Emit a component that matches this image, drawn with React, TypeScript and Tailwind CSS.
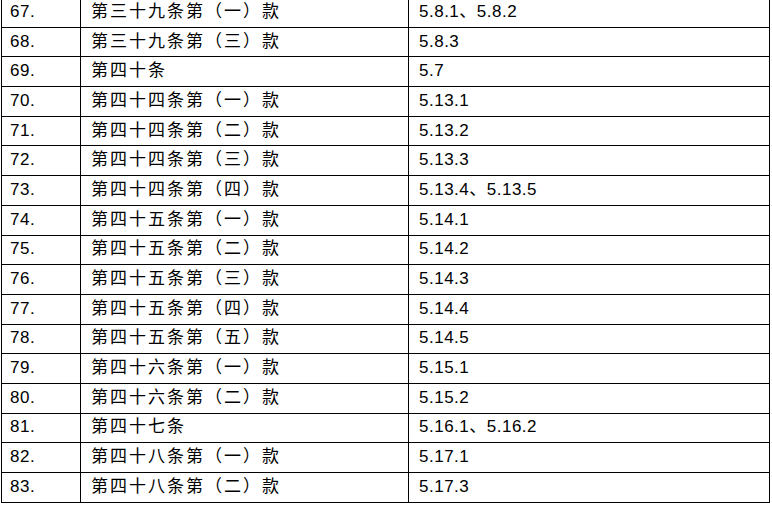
const rows: [string, string, string][] = [
  ["67.", "第三十九条第（一）款", "5.8.1、5.8.2"],
  ["68.", "第三十九条第（三）款", "5.8.3"],
  ["69.", "第四十条", "5.7"],
  ["70.", "第四十四条第（一）款", "5.13.1"],
  ["71.", "第四十四条第（二）款", "5.13.2"],
  ["72.", "第四十四条第（三）款", "5.13.3"],
  ["73.", "第四十四条第（四）款", "5.13.4、5.13.5"],
  ["74.", "第四十五条第（一）款", "5.14.1"],
  ["75.", "第四十五条第（二）款", "5.14.2"],
  ["76.", "第四十五条第（三）款", "5.14.3"],
  ["77.", "第四十五条第（四）款", "5.14.4"],
  ["78.", "第四十五条第（五）款", "5.14.5"],
  ["79.", "第四十六条第（一）款", "5.15.1"],
  ["80.", "第四十六条第（二）款", "5.15.2"],
  ["81.", "第四十七条", "5.16.1、5.16.2"],
  ["82.", "第四十八条第（一）款", "5.17.1"],
  ["83.", "第四十八条第（二）款", "5.17.3"],
];

export default function App() {
  return (
    <div className="w-[772px] h-[506px] overflow-hidden bg-white">
      <table
        className="ml-[1px] mt-[-3px] w-[768px] border-collapse table-fixed text-[17px] text-black"
        style={{ fontFamily: '"Liberation Sans", "Noto Sans CJK SC", sans-serif' }}
      >
        <colgroup>
          <col className="w-[79px]" />
          <col className="w-[328px]" />
          <col className="w-[361px]" />
        </colgroup>
        <tbody>
          {rows.map(([no, art, clause]) => (
            <tr key={no} className="h-[29.7px]">
              <td className="border border-black pl-[8px] pb-[2px] tracking-[0.5px] leading-none">{no}</td>
              <td className="border border-black pl-[10px] pb-[2px] tracking-[2px] leading-none whitespace-nowrap">{art}</td>
              <td className="border border-black pl-[10px] pb-[2px] tracking-[0.5px] leading-none whitespace-nowrap">{clause}</td>
            </tr>
          ))}
        </tbody>
      </table>
    </div>
  );
}
